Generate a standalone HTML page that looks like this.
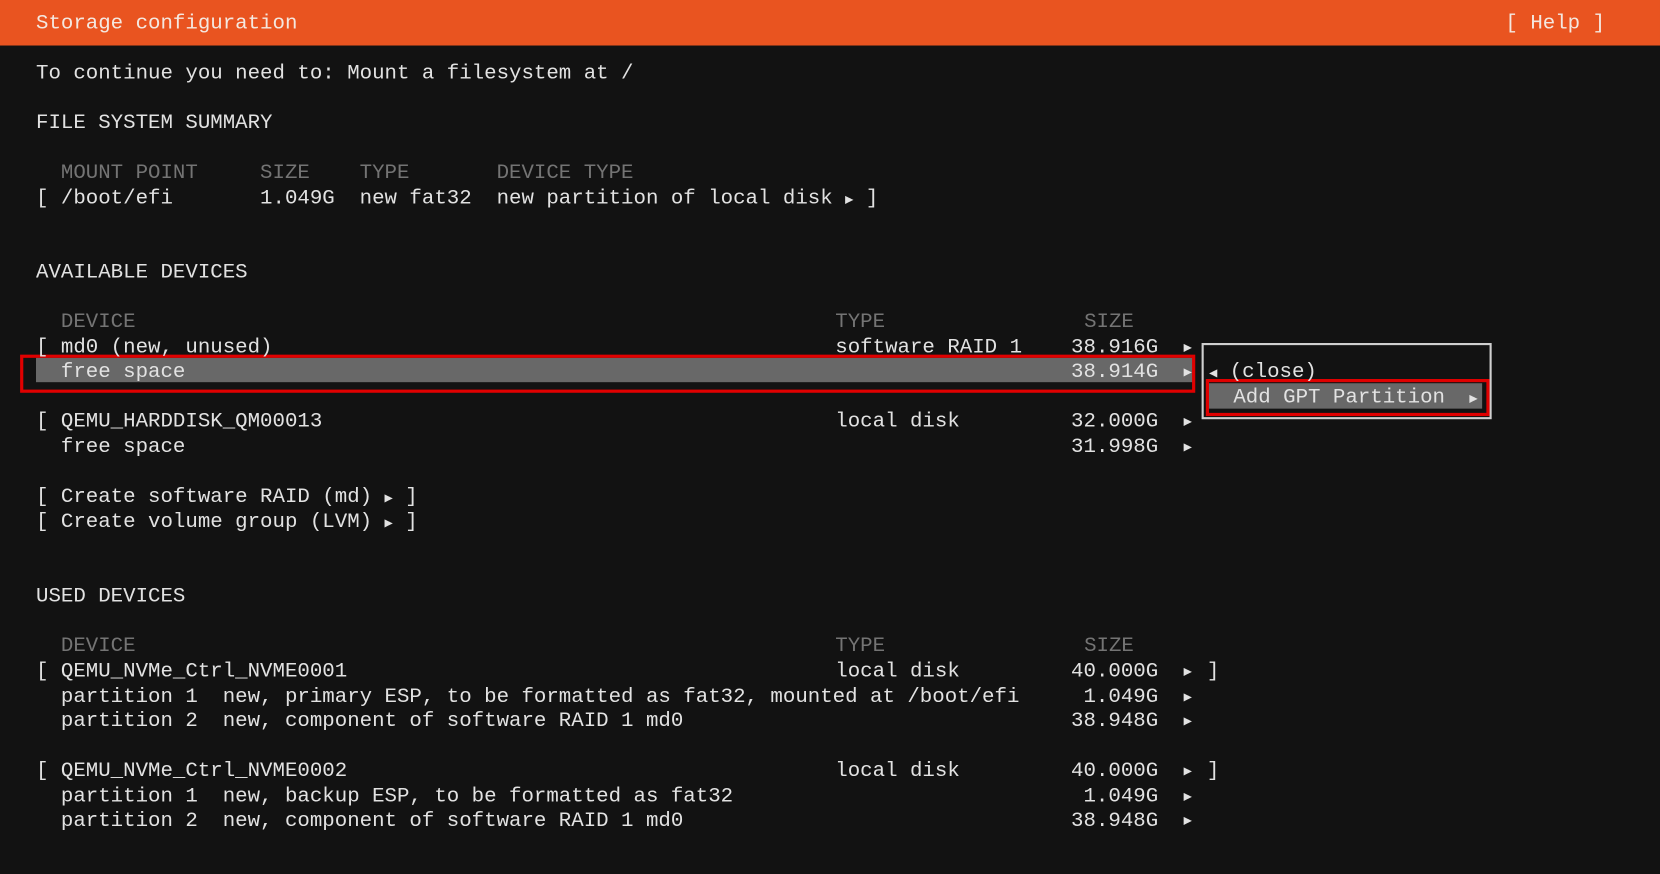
<!DOCTYPE html>
<html><head><meta charset="utf-8"><style>
html,body{margin:0;padding:0;background:#121212;overflow:hidden;width:1660px;height:874px}
#w{position:absolute;left:0;top:0;width:1568px;height:826px;transform:scale(1.05867);transform-origin:0 0;background:#121212;font-family:"Liberation Mono","DejaVu Sans Mono",monospace;font-size:19.6px;color:#e2e2e2}
.hdr{position:absolute;left:0;top:0;width:1568px;height:43px;background:#e95420}
.t{position:absolute;white-space:pre;line-height:23.5px;height:23.5px}
.g{color:#747474}
.a{font-family:"DejaVu Sans Mono",monospace;font-size:13px}
.sz{position:absolute;white-space:pre;line-height:23.5px;width:100px;text-align:right;left:994px}
.szh{position:absolute;white-space:pre;line-height:23.5px;left:1024px}
.ar{position:absolute;white-space:pre;line-height:23.5px;left:1118px;font-family:"DejaVu Sans Mono",monospace;font-size:13px}
.br{position:absolute;white-space:pre;line-height:23.5px;left:1140px}
.ty{position:absolute;white-space:pre;line-height:23.5px;left:789px}
.hl{position:absolute;background:#686868}
.red{position:absolute;border:3px solid #e00000;box-sizing:border-box}
.box{position:absolute;border:2px solid #cfcfcf;box-sizing:border-box}
.row{position:absolute;left:0;width:1568px;height:23.5px}
.row .c{position:absolute;left:34px;white-space:pre;line-height:23.5px}
</style></head><body><div id="w">
<div class="hdr"></div>
<div class="t" style="left:34px;top:11px;color:#f4e8e0">Storage configuration</div>
<div class="t" style="left:1422px;top:11px;color:#f4e8e0">[ Help ]</div>

<div class="hl" style="left:34px;top:338px;width:1094px;height:23px"></div>
<div class="red" style="left:19px;top:335px;width:1110px;height:36px"></div>
<div class="box" style="left:1135px;top:324px;width:274px;height:72px"></div>
<div class="hl" style="left:1142px;top:362px;width:258px;height:24px"></div>
<div class="red" style="left:1139px;top:358px;width:268px;height:35px"></div>

<div class="row" style="top:58px"><span class="c">To continue you need to: Mount a filesystem at /</span></div>
<div class="row" style="top:105px"><span class="c">FILE SYSTEM SUMMARY</span></div>
<div class="row g" style="top:152px"><span class="c">  MOUNT POINT     SIZE    TYPE       DEVICE TYPE</span></div>
<div class="row" style="top:176px"><span class="c">[ /boot/efi       1.049G  new fat32  new partition of local disk <span class="a">▶</span> ]</span></div>
<div class="row" style="top:246px"><span class="c">AVAILABLE DEVICES</span></div>

<div class="row g" style="top:293px"><span class="c">  DEVICE</span><span class="ty">TYPE</span><span class="szh">SIZE</span></div>
<div class="row" style="top:317px"><span class="c">[ md0 (new, unused)</span><span class="ty">software RAID 1</span><span class="sz">38.916G</span><span class="ar">▶</span></div>
<div class="row" style="top:340px"><span class="c">  free space</span><span class="sz">38.914G</span><span class="ar">▶</span></div>
<div class="t" style="left:1142px;top:340px"><span class="a">◀</span> (close)</div>
<div class="t" style="left:1165px;top:364px">Add GPT Partition</div>
<div class="t" style="left:1388px;top:364px"><span class="a">▶</span></div>
<div class="row" style="top:387px"><span class="c">[ QEMU_HARDDISK_QM00013</span><span class="ty">local disk</span><span class="sz">32.000G</span><span class="ar">▶</span></div>
<div class="row" style="top:411px"><span class="c">  free space</span><span class="sz">31.998G</span><span class="ar">▶</span></div>
<div class="row" style="top:458px"><span class="c">[ Create software RAID (md) <span class="a">▶</span> ]</span></div>
<div class="row" style="top:482px"><span class="c">[ Create volume group (LVM) <span class="a">▶</span> ]</span></div>

<div class="row" style="top:552px"><span class="c">USED DEVICES</span></div>
<div class="row g" style="top:599px"><span class="c">  DEVICE</span><span class="ty">TYPE</span><span class="szh">SIZE</span></div>
<div class="row" style="top:623px"><span class="c">[ QEMU_NVMe_Ctrl_NVME0001</span><span class="ty">local disk</span><span class="sz">40.000G</span><span class="ar">▶</span><span class="br">]</span></div>
<div class="row" style="top:647px"><span class="c">  partition 1  new, primary ESP, to be formatted as fat32, mounted at /boot/efi</span><span class="sz">1.049G</span><span class="ar">▶</span></div>
<div class="row" style="top:670px"><span class="c">  partition 2  new, component of software RAID 1 md0</span><span class="sz">38.948G</span><span class="ar">▶</span></div>
<div class="row" style="top:717px"><span class="c">[ QEMU_NVMe_Ctrl_NVME0002</span><span class="ty">local disk</span><span class="sz">40.000G</span><span class="ar">▶</span><span class="br">]</span></div>
<div class="row" style="top:741px"><span class="c">  partition 1  new, backup ESP, to be formatted as fat32</span><span class="sz">1.049G</span><span class="ar">▶</span></div>
<div class="row" style="top:764px"><span class="c">  partition 2  new, component of software RAID 1 md0</span><span class="sz">38.948G</span><span class="ar">▶</span></div>
</div></body></html>
